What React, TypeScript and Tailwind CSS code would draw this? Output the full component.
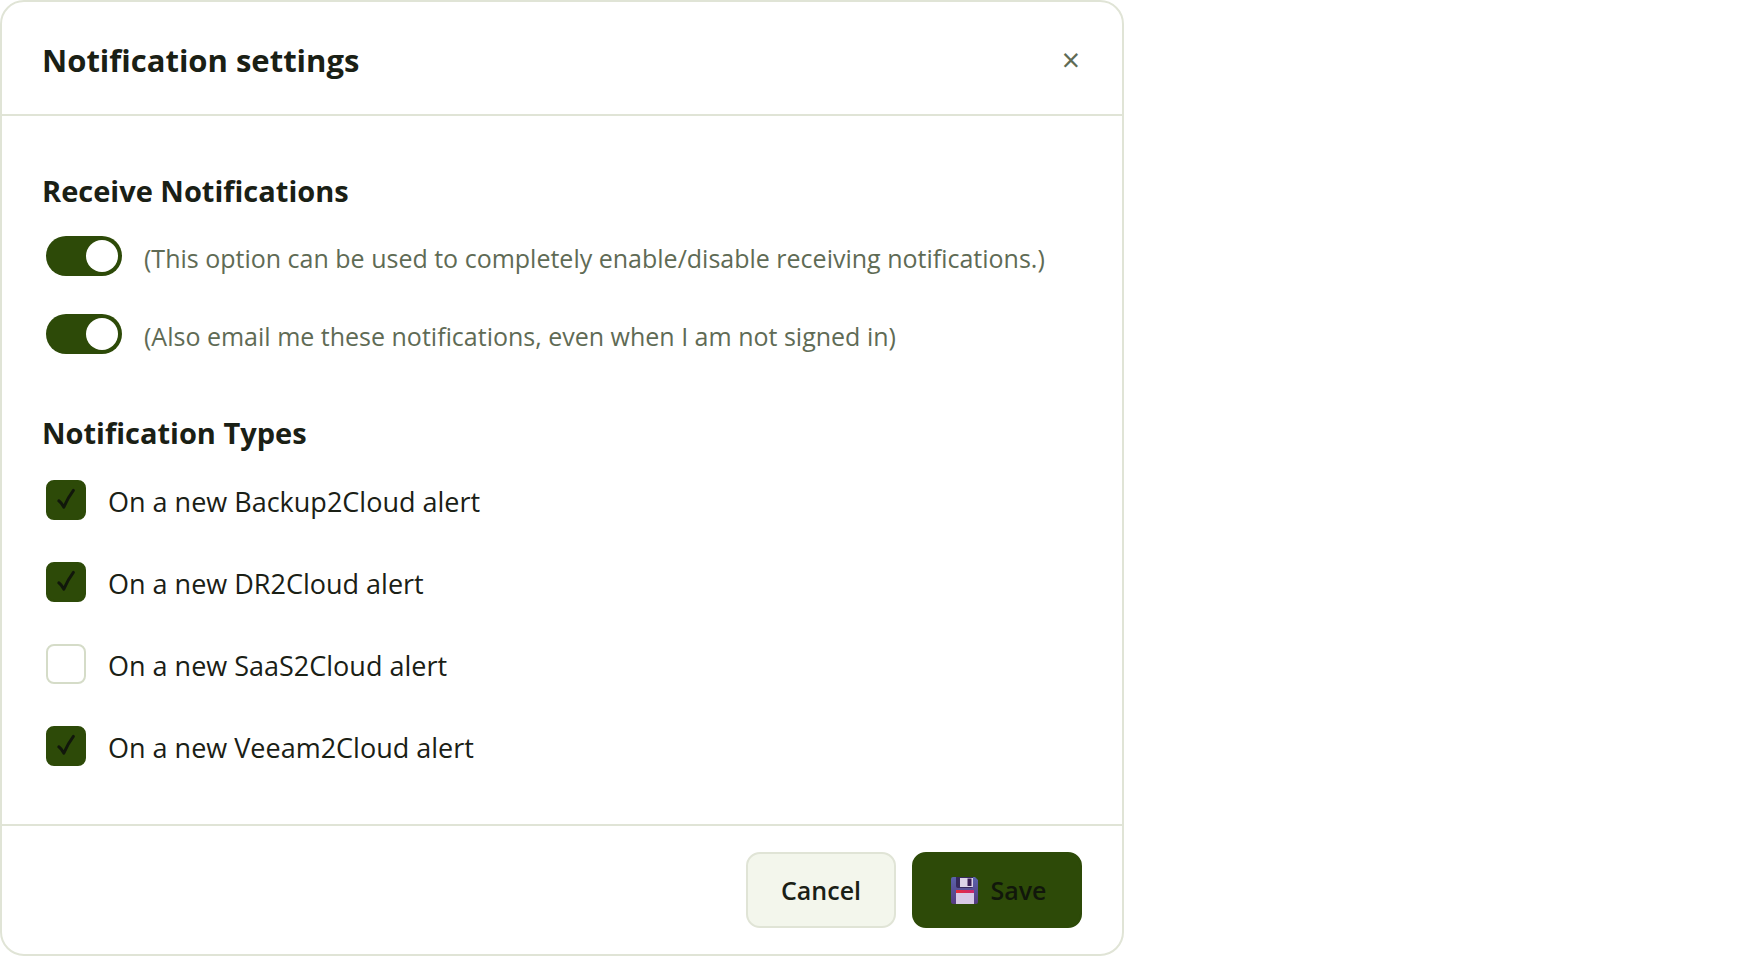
import { useState } from 'react';

const deliveryOptions = [
  { id: 'receive', label: '(This option can be used to completely enable/disable receiving notifications.)' },
  { id: 'email', label: '(Also email me these notifications, even when I am not signed in)' },
];

const notificationTypes = [
  { id: 'backup', label: 'On a new Backup2Cloud alert' },
  { id: 'dr', label: 'On a new DR2Cloud alert' },
  { id: 'saas', label: 'On a new SaaS2Cloud alert' },
  { id: 'veeam', label: 'On a new Veeam2Cloud alert' },
];

type FieldProps = {
  id: string;
  label: string;
  checked: boolean;
  onChange: () => void;
};

function Toggle({ id, label, checked, onChange }: FieldProps) {
  return (
    <div className="flex items-center gap-[22px] pl-1">
      <input
        id={id}
        type="checkbox"
        role="switch"
        checked={checked}
        onChange={onChange}
        className="h-10 w-[76px] shrink-0 cursor-pointer appearance-none rounded-full bg-[#d5dcc8] p-1 before:block before:size-8 before:rounded-full before:bg-white checked:bg-[#2d4a08] checked:before:ml-9"
      />
      <label htmlFor={id} className="pt-1 text-[25px] leading-9 text-[#5f6b55]">
        {label}
      </label>
    </div>
  );
}

function Checkbox({ id, label, checked, onChange }: FieldProps) {
  return (
    <div className="flex items-center gap-[22px] pl-1">
      <span className="grid size-10 shrink-0">
        <input
          id={id}
          type="checkbox"
          checked={checked}
          onChange={onChange}
          className="col-start-1 row-start-1 size-10 cursor-pointer appearance-none rounded-lg border-2 border-[#d5dcc8] bg-white checked:border-[#2d4a08] checked:bg-[#2d4a08]"
        />
        {checked && (
          <svg viewBox="0 0 40 40" className="pointer-events-none col-start-1 row-start-1 size-10" aria-hidden="true">
            <path
              d="M12.8 20.8 C14.8 22.2 16.4 24.4 17.8 27.2 C20.4 21.2 23.4 15.6 27.4 10.4"
              fill="none"
              stroke="#11170b"
              strokeWidth="3"
              strokeLinecap="round"
              strokeLinejoin="round"
            />
          </svg>
        )}
      </span>
      <label htmlFor={id} className="pt-1 text-[27px] leading-10 text-[#1a2015]">
        {label}
      </label>
    </div>
  );
}

function FloppyIcon() {
  return (
    <svg viewBox="0 0 27 27" className="size-[27px]" aria-hidden="true">
      <defs>
        <linearGradient id="floppy-body" x1="0" y1="0" x2="0" y2="1">
          <stop offset="0" stopColor="#5a62ab" />
          <stop offset="1" stopColor="#563b80" />
        </linearGradient>
        <linearGradient id="floppy-stripe" x1="0" y1="0" x2="1" y2="0">
          <stop offset="0" stopColor="#ea2c38" />
          <stop offset="1" stopColor="#c82870" />
        </linearGradient>
      </defs>
      <path d="M2 0 H24 L27 3 V25 Q27 27 25 27 H2 Q0 27 0 25 V2 Q0 0 2 0Z" fill="url(#floppy-body)" />
      <path d="M5 0 H22 V9 Q22 11 20 11 H7 Q5 11 5 9Z" fill="#36295c" />
      <path d="M9 1 H22 V10 H9Z" fill="#dcd3e8" />
      <path d="M16.5 1.5 H20.5 V9 H16.5Z" fill="#3a1e57" />
      <path d="M5 13 H23 V17 H5Z" fill="url(#floppy-stripe)" />
      <path d="M5 16 H23 V27 H5Z" fill="#d8c9e6" />
    </svg>
  );
}

export default function App() {
  const [enabled, setEnabled] = useState<Record<string, boolean>>({
    receive: true,
    email: true,
    backup: true,
    dr: true,
    saas: false,
    veeam: true,
  });

  const flip = (id: string) => setEnabled((prev) => ({ ...prev, [id]: !prev[id] }));

  return (
    <section className="w-full max-w-[1124px] rounded-3xl border-2 border-[#e0e4d6] bg-white font-['Open_Sans','Noto_Sans',sans-serif] text-[#1a2015]">
      <header className="flex items-center justify-between border-b-2 border-[#e0e4d6] px-10 pt-[34px] pb-[30px]">
        <h2 className="text-[31px] leading-[48px] font-bold">Notification settings</h2>
        <button type="button" aria-label="Close" className="cursor-pointer px-0.5 text-[32px] leading-10 text-[#5f6b55]">
          ×
        </button>
      </header>

      <div className="px-10 pt-[54px] pb-14">
        <h3 className="text-[29px] leading-[42px] font-bold">Receive Notifications</h3>
        <div className="mt-6 flex flex-col gap-[38px]">
          {deliveryOptions.map(({ id, label }) => (
            <Toggle key={id} id={id} label={label} checked={enabled[id]} onChange={() => flip(id)} />
          ))}
        </div>

        <h3 className="mt-[58px] text-[29px] leading-[42px] font-bold">Notification Types</h3>
        <div className="mt-6 flex flex-col gap-[38px]">
          {notificationTypes.map(({ id, label }) => (
            <Checkbox key={id} id={id} label={label} checked={enabled[id]} onChange={() => flip(id)} />
          ))}
        </div>
      </div>

      <footer className="flex justify-end gap-4 border-t-2 border-[#e0e4d6] px-10 py-[26px]">
        <button
          type="button"
          className="min-w-[150px] cursor-pointer rounded-[14px] border-2 border-[#e0e4d6] bg-[#f3f6ec] px-8 py-4 text-[25px] leading-10 font-semibold"
        >
          Cancel
        </button>
        <button
          type="button"
          className="flex min-w-[170px] cursor-pointer items-center justify-center gap-3 rounded-[14px] border-2 border-[#2d4a08] bg-[#2d4a08] py-4 pr-7 pl-8 text-[25px] leading-10 font-semibold text-[#11170b]"
        >
          <FloppyIcon />
          Save
        </button>
      </footer>
    </section>
  );
}
